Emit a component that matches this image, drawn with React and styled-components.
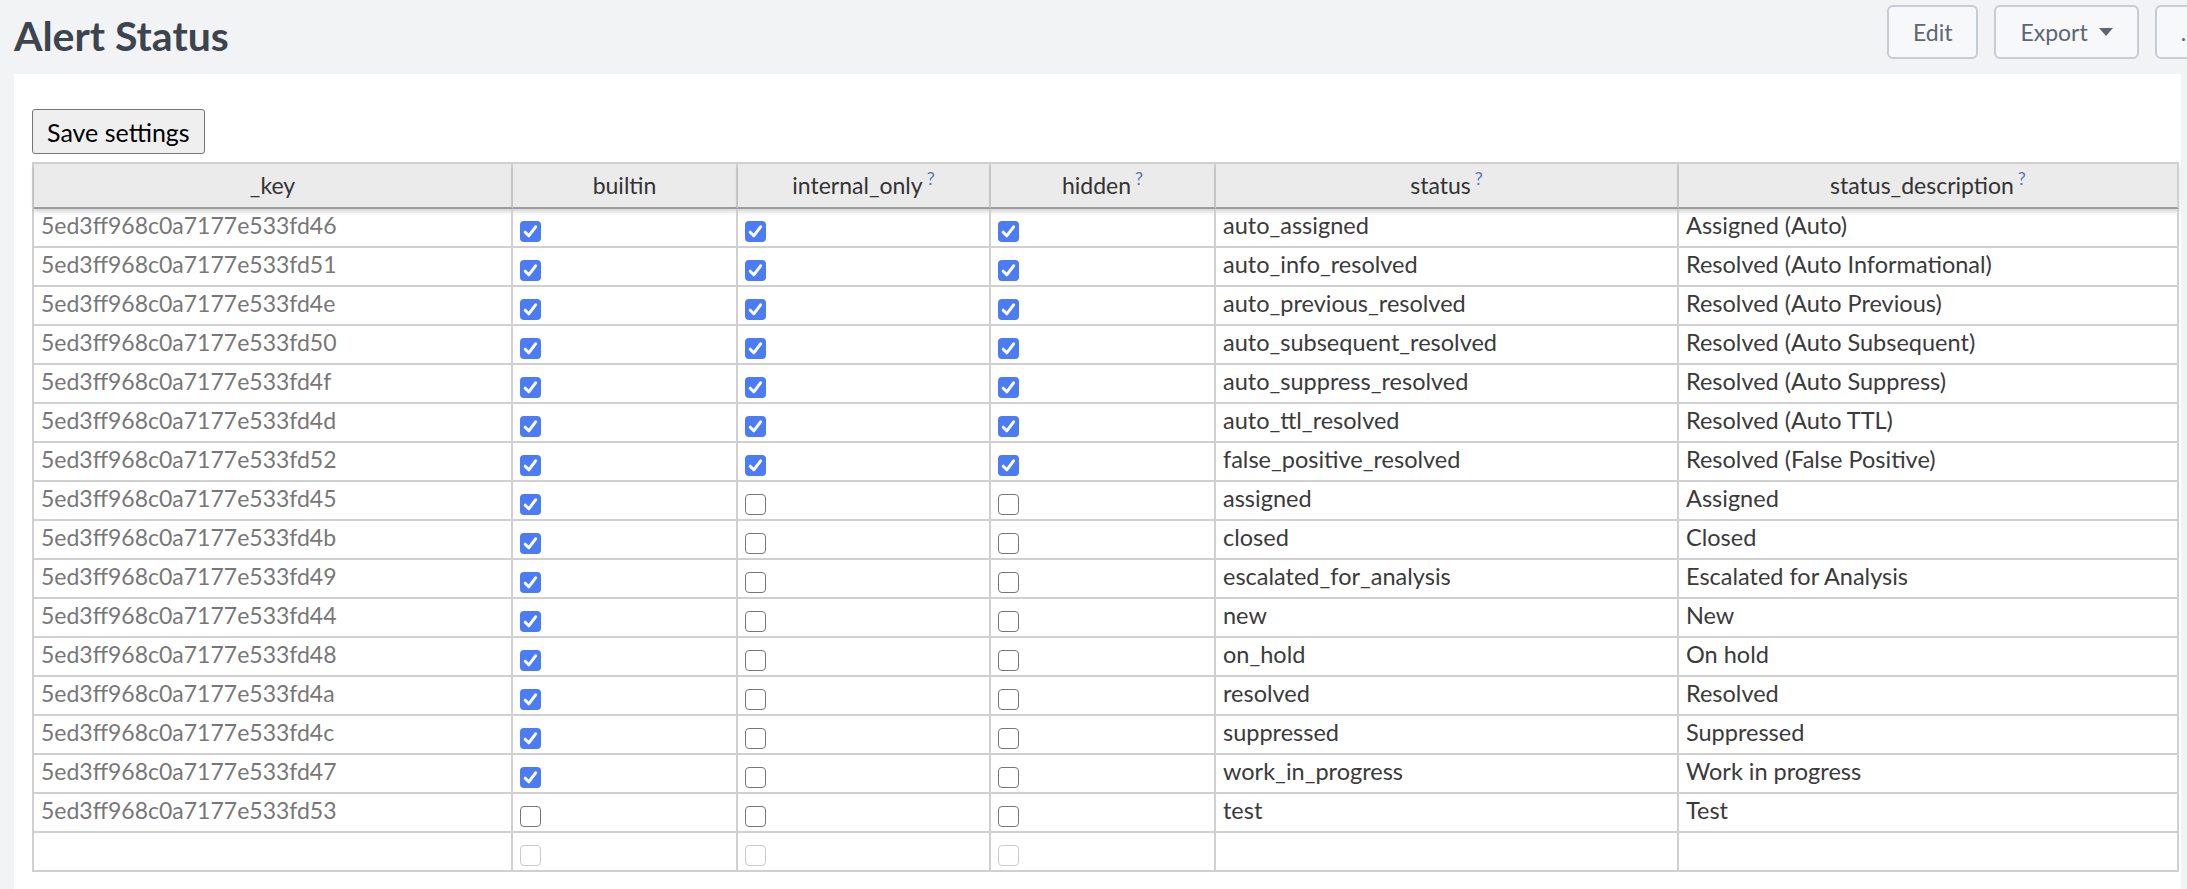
import React from "react";
import styled, { createGlobalStyle } from "styled-components";

const GlobalStyle = createGlobalStyle`
  html, body {
    margin: 0;
    padding: 0;
    overflow: hidden;
    background: #f2f3f5;
  }
  body {
    font-family: Lato, "Open Sans", "Liberation Sans", sans-serif;
  }
`;

const FONT = `Lato, "Open Sans", "Liberation Sans", sans-serif`;

const Page = styled.div`
  width: 2228px;
  min-height: 889px;
  background: #f2f3f5;
`;

const Header = styled.header`
  display: flex;
  justify-content: space-between;
  align-items: flex-start;
  height: 74px;
  box-sizing: border-box;
  padding: 5px 15px 0 14px;
`;

const Title = styled.h1`
  margin: 6px 0 0;
  font-family: ${FONT};
  font-size: 41px;
  line-height: 49px;
  font-weight: 700;
  color: #3c444d;
`;

const Toolbar = styled.div`
  display: flex;
  gap: 16px;
`;

const ToolButton = styled.button`
  display: inline-flex;
  align-items: center;
  gap: 11px;
  height: 54px;
  box-sizing: border-box;
  padding: ${(p) => p.$pad || "0 24px"};
  border: 2px solid #c6ccd3;
  border-radius: 6px;
  background: #f7f8fa;
  color: #5c6773;
  font-family: ${FONT};
  font-size: 23px;
  cursor: pointer;
`;

const Caret = styled.svg`
  width: 14px;
  height: 8px;
  fill: #5c6773;
`;

const Panel = styled.section`
  width: 2167px;
  margin-left: 14px;
  box-sizing: border-box;
  min-height: 815px;
  padding: 35px 0 17px 18px;
  background: #ffffff;
`;

const SaveButton = styled.button`
  display: block;
  height: 45px;
  box-sizing: border-box;
  padding: 0 14px;
  margin-bottom: 8px;
  border: 1px solid #767676;
  border-radius: 3px;
  background: #efefef;
  color: #000;
  font-family: ${FONT};
  font-size: 25px;
`;

const Table = styled.table`
  width: 2147px;
  box-sizing: border-box;
  table-layout: fixed;
  border-collapse: separate;
  border-spacing: 0;
  border-left: 2px solid #d0d0d0;
  border-top: 2px solid #d0d0d0;
  font-family: ${FONT};
  font-size: 23px;
  background: #fff;
`;

const Col = styled.col`
  width: ${(p) => p.$w}px;
`;

const HeadCell = styled.th`
  box-sizing: border-box;
  height: 45px;
  padding: 0 7px;
  background: #ebebeb;
  border-right: 2px solid #d0d0d0;
  border-bottom: 2px solid #9d9d9d;
  box-shadow: 0 3px 4px rgba(0, 0, 0, 0.16);
  color: #333;
  font-weight: 400;
  line-height: 27px;
  text-align: center;
  vertical-align: middle;
  white-space: nowrap;
`;

const Help = styled.sup`
  margin-left: 4px;
  font-size: 18px;
  line-height: 0;
  vertical-align: 9px;
  color: #5479b3;
`;

const Cell = styled.td`
  box-sizing: border-box;
  height: 39px;
  padding: 3px 7px 0;
  border-right: 2px solid #d0d0d0;
  border-bottom: 2px solid #d0d0d0;
  color: ${(p) => (p.$dim ? "#777" : "#3a3a3a")};
  font-size: ${(p) => (p.$dim ? "23px" : "23.5px")};
  line-height: 27px;
  vertical-align: top;
  white-space: nowrap;
  overflow: hidden;
`;

const Box = styled.span`
  display: flex;
  align-items: center;
  justify-content: center;
  width: 21px;
  height: 21px;
  box-sizing: border-box;
  margin-top: 9px;
  border-radius: 4px;
  background: ${(p) => (p.$checked ? "#4b7cf5" : "#fff")};
  border: ${(p) =>
    p.$checked ? "none" : `1.5px solid ${p.$disabled ? "#cbcbcb" : "#767676"}`};
`;

const Checkbox = ({ checked, disabled }) => (
  <Box $checked={checked} $disabled={disabled} role="checkbox" aria-checked={!!checked}>
    {checked && (
      <svg width="21" height="21" viewBox="0 0 21 21">
        <path
          d="M5.2 11.2 L8.8 14.8 L15.6 5.8"
          fill="none"
          stroke="#fff"
          strokeWidth="3"
          strokeLinecap="round"
          strokeLinejoin="round"
        />
      </svg>
    )}
  </Box>
);

const columns = [
  { name: "_key", w: 479 },
  { name: "builtin", w: 225 },
  { name: "internal_only", w: 253, help: true },
  { name: "hidden", w: 225, help: true },
  { name: "status", w: 463, help: true },
  { name: "status_description", w: 500, help: true },
];

const rows = [
  ["5ed3ff968c0a7177e533fd46", 1, 1, 1, "auto_assigned", "Assigned (Auto)"],
  ["5ed3ff968c0a7177e533fd51", 1, 1, 1, "auto_info_resolved", "Resolved (Auto Informational)"],
  ["5ed3ff968c0a7177e533fd4e", 1, 1, 1, "auto_previous_resolved", "Resolved (Auto Previous)"],
  ["5ed3ff968c0a7177e533fd50", 1, 1, 1, "auto_subsequent_resolved", "Resolved (Auto Subsequent)"],
  ["5ed3ff968c0a7177e533fd4f", 1, 1, 1, "auto_suppress_resolved", "Resolved (Auto Suppress)"],
  ["5ed3ff968c0a7177e533fd4d", 1, 1, 1, "auto_ttl_resolved", "Resolved (Auto TTL)"],
  ["5ed3ff968c0a7177e533fd52", 1, 1, 1, "false_positive_resolved", "Resolved (False Positive)"],
  ["5ed3ff968c0a7177e533fd45", 1, 0, 0, "assigned", "Assigned"],
  ["5ed3ff968c0a7177e533fd4b", 1, 0, 0, "closed", "Closed"],
  ["5ed3ff968c0a7177e533fd49", 1, 0, 0, "escalated_for_analysis", "Escalated for Analysis"],
  ["5ed3ff968c0a7177e533fd44", 1, 0, 0, "new", "New"],
  ["5ed3ff968c0a7177e533fd48", 1, 0, 0, "on_hold", "On hold"],
  ["5ed3ff968c0a7177e533fd4a", 1, 0, 0, "resolved", "Resolved"],
  ["5ed3ff968c0a7177e533fd4c", 1, 0, 0, "suppressed", "Suppressed"],
  ["5ed3ff968c0a7177e533fd47", 1, 0, 0, "work_in_progress", "Work in progress"],
  ["5ed3ff968c0a7177e533fd53", 0, 0, 0, "test", "Test"],
];

export default function App() {
  return (
    <Page>
      <GlobalStyle />
      <Header>
        <Title>Alert Status</Title>
        <Toolbar>
          <ToolButton>Edit</ToolButton>
          <ToolButton>
            Export
            <Caret viewBox="0 0 14 8">
              <path d="M0 0 H14 L7 8 Z" />
            </Caret>
          </ToolButton>
          <ToolButton $pad="0 14px 0 24px">...</ToolButton>
        </Toolbar>
      </Header>
      <Panel>
        <SaveButton>Save settings</SaveButton>
        <Table>
          <colgroup>
            {columns.map((c) => (
              <Col key={c.name} $w={c.w} />
            ))}
          </colgroup>
          <thead>
            <tr>
              {columns.map((c) => (
                <HeadCell key={c.name}>
                  {c.name}
                  {c.help && <Help>?</Help>}
                </HeadCell>
              ))}
            </tr>
          </thead>
          <tbody>
            {rows.map((r) => (
              <tr key={r[0]}>
                <Cell $dim>{r[0]}</Cell>
                <Cell>
                  <Checkbox checked={!!r[1]} />
                </Cell>
                <Cell>
                  <Checkbox checked={!!r[2]} />
                </Cell>
                <Cell>
                  <Checkbox checked={!!r[3]} />
                </Cell>
                <Cell>{r[4]}</Cell>
                <Cell>{r[5]}</Cell>
              </tr>
            ))}
            <tr>
              <Cell $dim />
              <Cell>
                <Checkbox disabled />
              </Cell>
              <Cell>
                <Checkbox disabled />
              </Cell>
              <Cell>
                <Checkbox disabled />
              </Cell>
              <Cell />
              <Cell />
            </tr>
          </tbody>
        </Table>
      </Panel>
    </Page>
  );
}
